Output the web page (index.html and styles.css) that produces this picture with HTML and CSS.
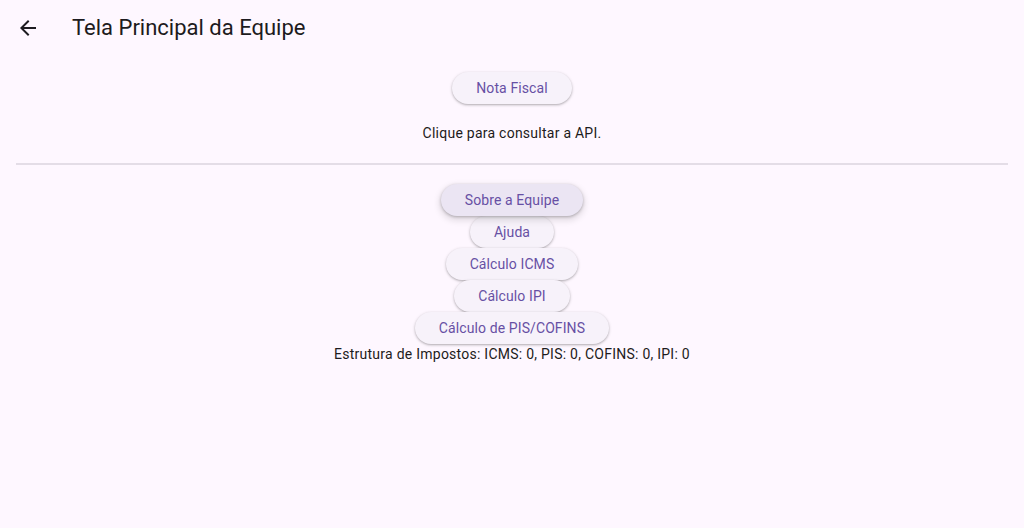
FILE: index.html
```html
<!DOCTYPE html>
<html lang="pt-BR">
<head>
<meta charset="utf-8">
<title>Tela Principal da Equipe</title>
<link rel="stylesheet" href="styles.css">
</head>
<body>
<header class="appbar">
  <div class="leading">
    <svg class="back-icon" viewBox="0 0 24 24" width="24" height="24" aria-hidden="true"><path d="M20 11H7.83l5.59-5.59L12 4l-8 8 8 8 1.41-1.41L7.83 13H20v-2z"/></svg>
  </div>
  <h1 class="title">Tela Principal da Equipe</h1>
</header>
<main class="content">
  <button class="btn">Nota Fiscal</button>
  <p class="text hint">Clique para consultar a API.</p>
  <hr class="divider">
  <div class="stack">
    <button class="btn btn-hover">Sobre a Equipe</button>
    <button class="btn">Ajuda</button>
    <button class="btn">Cálculo ICMS</button>
    <button class="btn">Cálculo IPI</button>
    <button class="btn">Cálculo de PIS/COFINS</button>
    <p class="text">Estrutura de Impostos: ICMS: 0, PIS: 0, COFINS: 0, IPI: 0</p>
  </div>
</main>
</body>
</html>
```

FILE: styles.css
```css
html, body {
  margin: 0;
  padding: 0;
}
body {
  background: #FEF7FF;
  font-family: Roboto, "Noto Sans", "Liberation Sans", sans-serif;
  color: #1D1B20;
  width: 1024px;
  height: 528px;
  overflow: hidden;
}
.appbar {
  height: 56px;
  display: flex;
  align-items: center;
}
.leading {
  width: 56px;
  height: 56px;
  display: flex;
  align-items: center;
  justify-content: center;
  margin-right: 16px;
}
.back-icon {
  fill: #1D1B20;
}
.title {
  margin: 0;
  font-size: 22px;
  font-weight: 400;
  line-height: 28px;
  color: #1D1B20;
}
.content {
  padding: 16px;
  display: flex;
  flex-direction: column;
  align-items: center;
}
.btn {
  height: 32px;
  padding: 0 24px;
  border: none;
  border-radius: 16px;
  background: #F7F2FA;
  color: #6750A4;
  font-family: Roboto, "Noto Sans", "Liberation Sans", sans-serif;
  font-size: 14px;
  font-weight: 400;
  letter-spacing: 0.1px;
  line-height: 20px;
  box-shadow: 0 1px 2px rgba(0,0,0,0.22), 0 1px 3px 1px rgba(0,0,0,0.08);
  cursor: pointer;
}
.btn-hover {
  background: #EBE5F3;
  box-shadow: 0 1px 3px rgba(0,0,0,0.25), 0 3px 6px 2px rgba(0,0,0,0.1);
  position: relative;
  z-index: 1;
}
.text {
  margin: 0;
  font-size: 14px;
  line-height: 20px;
  letter-spacing: 0.25px;
  color: #1D1B20;
}
.hint {
  margin-top: 19px;
}
.divider {
  align-self: stretch;
  margin: 20px 0 19px;
  border: none;
  height: 2px;
  background: #E4DDE7;
}
.stack {
  display: flex;
  flex-direction: column;
  align-items: center;
}
```
